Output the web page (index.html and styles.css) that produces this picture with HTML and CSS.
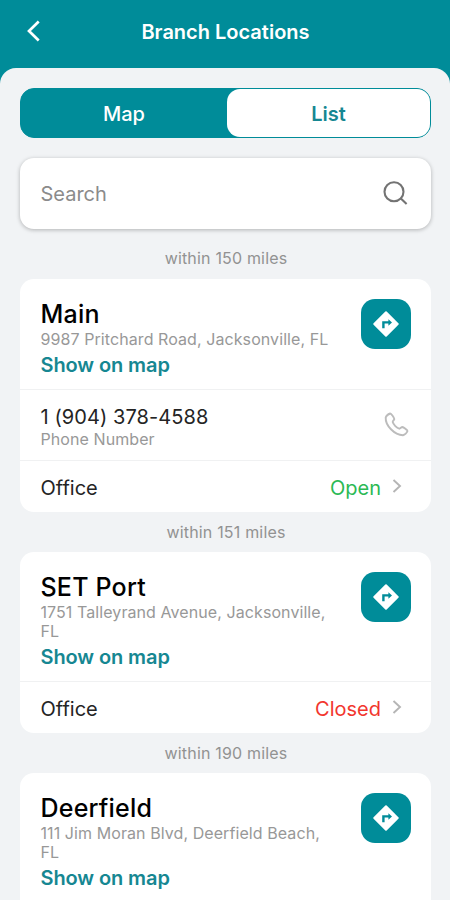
FILE: index.html
```html
<!DOCTYPE html>
<html lang="en">
<head>
<meta charset="utf-8">
<title>Branch Locations</title>
<link rel="stylesheet" href="styles.css">
</head>
<body>
<svg width="0" height="0" class="defs">
  <symbol id="directions" viewBox="0 0 26 26">
    <path d="M12.300.6a1 1 0 0 1 1.400 0l11.700 11.700a1 1 0 0 1 0 1.400L13.700 25.400a1 1 0 0 1-1.400 0L.6 13.700a1 1 0 0 1 0-1.400z" fill="#fff"/>
    <path d="M9.200 17.300V10.200h6.200V8.200l3.600 3.300-3.600 3.300v-2.200h-3.800v4.700z" fill="#008c99"/>
  </symbol>
  <symbol id="chevron" viewBox="0 0 10 14">
    <path d="M1.500 1 8 7l-6.500 6" fill="none" stroke="#b5b5b5" stroke-width="1.900"/>
  </symbol>
</svg>
<header class="top">
  <svg class="back" width="15" height="22" viewBox="0 0 15 22"><path d="M12.700 1.500 3 11l9.700 9.500" fill="none" stroke="#fff" stroke-width="2.700"/></svg>
  <h1>Branch Locations</h1>
</header>
<main class="sheet">
  <nav class="tabs">
    <span class="tab">Map</span>
    <span class="tab active">List</span>
  </nav>
  <div class="search">
    <span>Search</span>
    <svg width="25" height="25" viewBox="0 0 25 25" fill="none" stroke="#737373" stroke-width="2.100"><circle cx="11" cy="10.800" r="9.500"/><path d="m17.600 17.300 6 5.800"/></svg>
  </div>
  <p class="distance">within 150 miles</p>
  <section class="card">
    <div class="branch">
      <div class="info">
        <h2>Main</h2>
        <p class="muted">9987 Pritchard Road, Jacksonville, FL</p>
        <a class="link">Show on map</a>
      </div>
      <div class="go"><svg width="26" height="26"><use href="#directions"/></svg></div>
    </div>
    <div class="row phone">
      <div><p class="value number">1 (904) 378-4588</p><p class="muted sub">Phone Number</p></div>
      <svg width="25" height="25" viewBox="0 0 25 25" fill="none" stroke="#bcbcbc" stroke-width="1.900" stroke-linejoin="round"><path d="M6.200 1.500C4.800 2 2.200 3.700 1.700 5.500 1.200 13.500 10.500 23 19 23.300c1.800-.2 3.900-2.700 4.500-4.300.2-.7-4-3.900-5.200-4-.8 0-2.200 1.800-3 1.700-2.600-.8-5.800-4-6.600-6.700-.1-.9 1.600-2.100 1.600-3C10.200 5.800 7.200 1.400 6.200 1.500z"/></svg>
    </div>
    <div class="row office">
      <p class="value">Office</p><p class="status open">Open</p><svg width="10" height="14"><use href="#chevron"/></svg>
    </div>
  </section>
  <p class="distance">within 151 miles</p>
  <section class="card">
    <div class="branch">
      <div class="info">
        <h2>SET Port</h2>
        <p class="muted">1751 Talleyrand Avenue, Jacksonville, FL</p>
        <a class="link">Show on map</a>
      </div>
      <div class="go"><svg width="26" height="26"><use href="#directions"/></svg></div>
    </div>
    <div class="row office">
      <p class="value">Office</p><p class="status closed">Closed</p><svg width="10" height="14"><use href="#chevron"/></svg>
    </div>
  </section>
  <p class="distance">within 190 miles</p>
  <section class="card last">
    <div class="branch">
      <div class="info">
        <h2>Deerfield</h2>
        <p class="muted">111 Jim Moran Blvd, Deerfield Beach, FL</p>
        <a class="link">Show on map</a>
      </div>
      <div class="go"><svg width="26" height="26"><use href="#directions"/></svg></div>
    </div>
  </section>
</main>
</body>
</html>
```
FILE: styles.css
```css
* { box-sizing: border-box; margin: 0; padding: 0; }
body { height: 900px; overflow: hidden; background: #008c99; font-family: Inter, "Liberation Sans", sans-serif; color: #242424; }
.defs { position: absolute; }
.top { height: 68px; display: grid; grid-template-columns: 60px 1fr 60px; align-items: center; padding-bottom: 6px; color: #fff; }
.back { margin-left: 26px; }
h1 { font-size: 20px; line-height: 24px; font-weight: 600; text-align: center; padding: 2px 0 0 1px; }
.sheet { min-height: 832px; background: #f1f3f5; border-radius: 16px 16px 0 0; padding: 20px 19px 0 20px; }
.tabs { display: grid; grid-template-columns: 206px 1fr; height: 50px; border: 1px solid #008c99; border-radius: 14px; background: #008c99; }
.tab { display: flex; align-items: center; justify-content: center; padding-top: 2px; font-size: 20px; font-weight: 500; color: #fff; }
.tab.active { background: #fff; border-radius: 13px; color: #168792; font-weight: 600; }
.search { margin-top: 20px; height: 71px; display: flex; align-items: center; justify-content: space-between; padding: 0 23px 0 20.5px; background: #fff; border-radius: 14px; box-shadow: 0 1px 4px rgba(0,0,0,.27); font-size: 20px; color: #8b8b8b; }
.distance { height: 40px; line-height: 40px; font-size: 16px; letter-spacing: .18px; text-align: center; color: #929292; padding-left: 1px; }
.search + .distance { height: 50px; line-height: 59px; }
.card { background: #fff; border-radius: 14px; }
.last { min-height: 181px; }
.branch { display: flex; justify-content: space-between; padding: 20px 20px 12px 20.5px; }
.info { width: 292px; }
h2 { font-size: 25px; line-height: 28px; font-weight: 500; letter-spacing: .2px; color: #000; padding-top: 1px; margin-bottom: 2px; }
.muted { font-size: 16px; line-height: 19.500px; letter-spacing: .08px; color: #989898; }
.link { display: block; margin-top: 3px; font-size: 20px; line-height: 24px; font-weight: 600; letter-spacing: -.1px; color: #168792; }
.go { width: 50px; height: 50px; border-radius: 14px; background: #008c99; display: grid; place-items: center; }
.row { display: flex; align-items: center; border-top: 1px solid #f0f1f2; padding: 0 20.5px; }
.phone { height: 71px; justify-content: space-between; padding-right: 22px; }
.phone > div { padding-top: 5px; }
.value, .status { font-size: 20px; line-height: 24px; }
.number { letter-spacing: .08px; }
.sub { margin-top: 1px; }
.office { height: 52px; padding-right: 29px; }
.office p { padding-top: 3px; }
.status { margin-left: auto; margin-right: 11px; }
.open { color: #2bb954; }
.closed { color: #f2362e; }
```
